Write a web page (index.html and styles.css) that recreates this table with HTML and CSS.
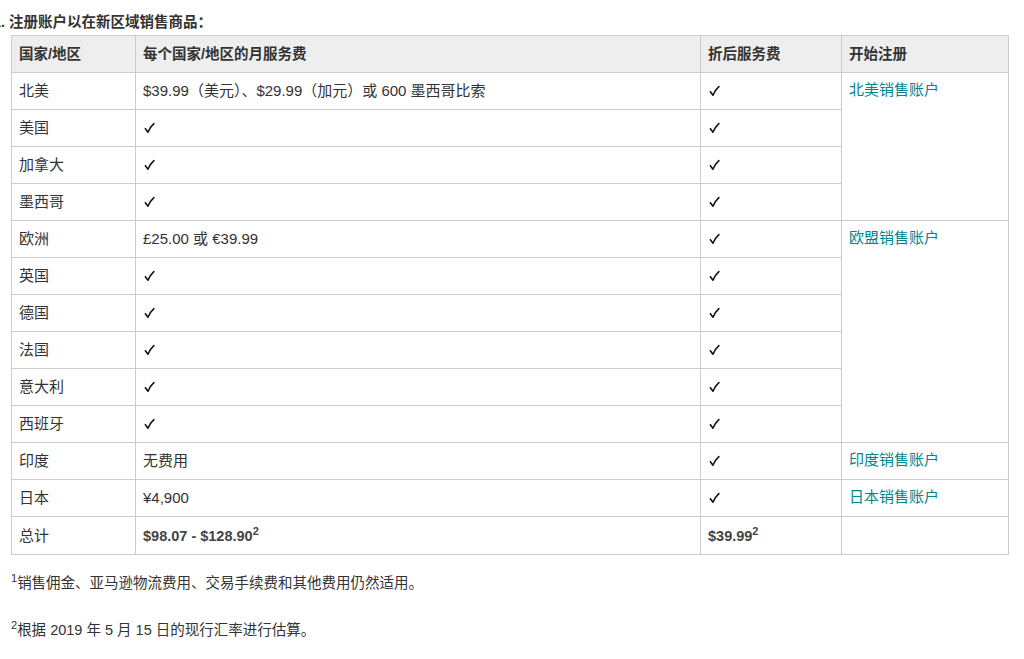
FILE: index.html
```html
<!DOCTYPE html>
<html lang="zh-CN">
<head>
<meta charset="utf-8">
<link rel="stylesheet" href="styles.css">
</head>
<body>
<div class="page">
  <p class="title">1. 注册账户以在新区域销售商品：</p>
  <table class="fees">
    <colgroup>
      <col class="c1"><col class="c2"><col class="c3"><col class="c4">
    </colgroup>
    <thead>
      <tr><th>国家/地区</th><th>每个国家/地区的月服务费</th><th>折后服务费</th><th>开始注册</th></tr>
    </thead>
    <tbody>
      <tr><td>北美</td><td>$39.99（美元）、$29.99（加元）或 600 墨西哥比索</td><td><svg class="ck" viewBox="0 0 12 12"><path d="M1.5 6.8 L4.3 10.6 Q6.5 5 10.8 1.2"/></svg></td><td rowspan="4" class="link"><a href="#">北美销售账户</a></td></tr>
      <tr><td>美国</td><td><svg class="ck" viewBox="0 0 12 12"><path d="M1.5 6.8 L4.3 10.6 Q6.5 5 10.8 1.2"/></svg></td><td><svg class="ck" viewBox="0 0 12 12"><path d="M1.5 6.8 L4.3 10.6 Q6.5 5 10.8 1.2"/></svg></td></tr>
      <tr><td>加拿大</td><td><svg class="ck" viewBox="0 0 12 12"><path d="M1.5 6.8 L4.3 10.6 Q6.5 5 10.8 1.2"/></svg></td><td><svg class="ck" viewBox="0 0 12 12"><path d="M1.5 6.8 L4.3 10.6 Q6.5 5 10.8 1.2"/></svg></td></tr>
      <tr><td>墨西哥</td><td><svg class="ck" viewBox="0 0 12 12"><path d="M1.5 6.8 L4.3 10.6 Q6.5 5 10.8 1.2"/></svg></td><td><svg class="ck" viewBox="0 0 12 12"><path d="M1.5 6.8 L4.3 10.6 Q6.5 5 10.8 1.2"/></svg></td></tr>
      <tr><td>欧洲</td><td>£25.00 或 €39.99</td><td><svg class="ck" viewBox="0 0 12 12"><path d="M1.5 6.8 L4.3 10.6 Q6.5 5 10.8 1.2"/></svg></td><td rowspan="6" class="link"><a href="#">欧盟销售账户</a></td></tr>
      <tr><td>英国</td><td><svg class="ck" viewBox="0 0 12 12"><path d="M1.5 6.8 L4.3 10.6 Q6.5 5 10.8 1.2"/></svg></td><td><svg class="ck" viewBox="0 0 12 12"><path d="M1.5 6.8 L4.3 10.6 Q6.5 5 10.8 1.2"/></svg></td></tr>
      <tr><td>德国</td><td><svg class="ck" viewBox="0 0 12 12"><path d="M1.5 6.8 L4.3 10.6 Q6.5 5 10.8 1.2"/></svg></td><td><svg class="ck" viewBox="0 0 12 12"><path d="M1.5 6.8 L4.3 10.6 Q6.5 5 10.8 1.2"/></svg></td></tr>
      <tr><td>法国</td><td><svg class="ck" viewBox="0 0 12 12"><path d="M1.5 6.8 L4.3 10.6 Q6.5 5 10.8 1.2"/></svg></td><td><svg class="ck" viewBox="0 0 12 12"><path d="M1.5 6.8 L4.3 10.6 Q6.5 5 10.8 1.2"/></svg></td></tr>
      <tr><td>意大利</td><td><svg class="ck" viewBox="0 0 12 12"><path d="M1.5 6.8 L4.3 10.6 Q6.5 5 10.8 1.2"/></svg></td><td><svg class="ck" viewBox="0 0 12 12"><path d="M1.5 6.8 L4.3 10.6 Q6.5 5 10.8 1.2"/></svg></td></tr>
      <tr><td>西班牙</td><td><svg class="ck" viewBox="0 0 12 12"><path d="M1.5 6.8 L4.3 10.6 Q6.5 5 10.8 1.2"/></svg></td><td><svg class="ck" viewBox="0 0 12 12"><path d="M1.5 6.8 L4.3 10.6 Q6.5 5 10.8 1.2"/></svg></td></tr>
      <tr><td>印度</td><td>无费用</td><td><svg class="ck" viewBox="0 0 12 12"><path d="M1.5 6.8 L4.3 10.6 Q6.5 5 10.8 1.2"/></svg></td><td class="link"><a href="#">印度销售账户</a></td></tr>
      <tr><td>日本</td><td>¥4,900</td><td><svg class="ck" viewBox="0 0 12 12"><path d="M1.5 6.8 L4.3 10.6 Q6.5 5 10.8 1.2"/></svg></td><td class="link"><a href="#">日本销售账户</a></td></tr>
      <tr class="total"><td>总计</td><td><b>$98.07 - $128.90<sup>2</sup></b></td><td><b>$39.99<sup>2</sup></b></td><td></td></tr>
    </tbody>
  </table>
  <p class="note note1"><sup>1</sup>销售佣金、亚马逊物流费用、交易手续费和其他费用仍然适用。</p>
  <p class="note note2"><sup>2</sup>根据 2019 年 5 月 15 日的现行汇率进行估算。</p>
</div>
</body>
</html>
```

FILE: styles.css
```css
html, body {
  margin: 0;
  padding: 0;
  background: #fff;
}
body {
  font-family: "Liberation Sans", Arial, "Noto Sans CJK SC", sans-serif;
  font-size: 15px;
  color: #333;
}
.page {
  padding: 0 17px 0 11px;
}
.title {
  margin: 0 0 0 -18px;
  padding-top: 12px;
  height: 23px;
  line-height: 20px;
  font-size: 14.5px;
  font-weight: bold;
  color: #333;
  white-space: nowrap;
}
.fees {
  border-collapse: collapse;
  width: 997px;
  table-layout: fixed;
}
.c1 { width: 124px; }
.c2 { width: 565px; }
.c3 { width: 141px; }
.c4 { width: 167px; }
.fees tr {
  height: 37px;
}
.fees th, .fees td {
  border: 1px solid #ccc;
  text-align: left;
  padding: 0 7px;
  line-height: 20px;
  vertical-align: middle;
}
.fees th {
  background: #eee;
  font-weight: bold;
  font-size: 14.5px;
  color: #333;
}
.fees td.link {
  vertical-align: top;
  padding-top: 7px;
}
.fees a {
  color: #00858f;
  text-decoration: none;
}
.fees .total {
  height: 38px;
}
.fees b {
  color: #444;
  font-size: 14.5px;
}
.ck {
  display: inline-block;
  width: 11px;
  height: 12px;
  vertical-align: -1px;
  margin-left: 1px;
}
.ck path {
  fill: none;
  stroke: #111;
  stroke-width: 1.7;
  stroke-linecap: round;
  stroke-linejoin: round;
}
sup {
  font-size: 11px;
  line-height: 0;
  vertical-align: 6px;
}
.note {
  margin: 0;
  line-height: 20px;
  font-size: 14.5px;
  color: #333;
}
.note1 {
  margin-top: 18px;
}
.note2 {
  margin-top: 27px;
}
```
